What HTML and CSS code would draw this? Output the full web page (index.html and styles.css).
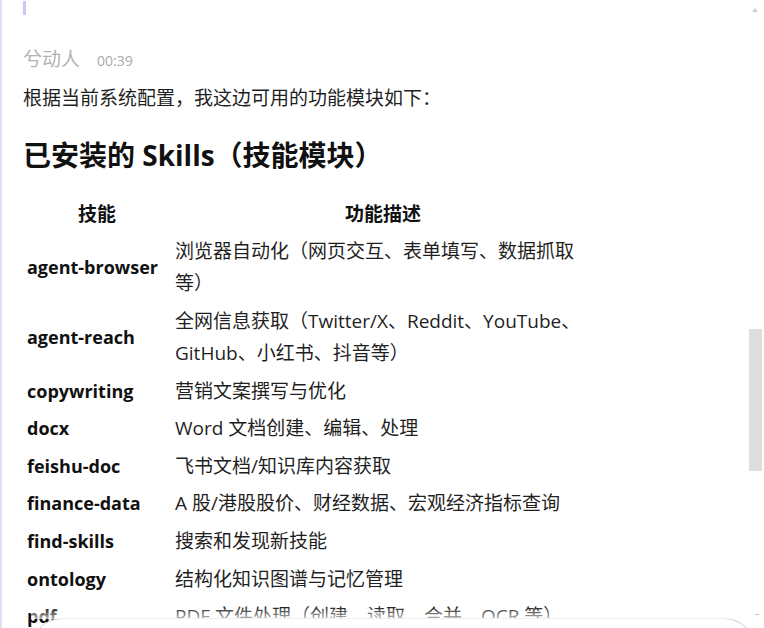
FILE: index.html
```html
<!DOCTYPE html>
<html lang="zh-CN">
<head>
<meta charset="utf-8">
<title>Skills</title>
<link rel="stylesheet" href="styles.css">
</head>
<body>
<div class="edge"></div>
<main class="chat">
  <div class="marker"></div>
  <div class="meta"><span class="name">兮动人</span><span class="time">00:39</span></div>
  <p class="intro">根据当前系统配置，我这边可用的功能模块如下：</p>
  <h2 class="title">已安装的 Skills（技能模块）</h2>
  <table class="skills">
    <colgroup><col class="c1"><col class="c2"></colgroup>
    <thead>
      <tr><th>技能</th><th>功能描述</th></tr>
    </thead>
    <tbody>
      <tr><td class="k">agent-browser</td><td>浏览器自动化（网页交互、表单填写、数据抓取等）</td></tr>
      <tr><td class="k">agent-reach</td><td>全网信息获取（Twitter/X、Reddit、YouTube、GitHub、小红书、抖音等）</td></tr>
      <tr><td class="k">copywriting</td><td>营销文案撰写与优化</td></tr>
      <tr><td class="k">docx</td><td>Word 文档创建、编辑、处理</td></tr>
      <tr><td class="k">feishu-doc</td><td>飞书文档/知识库内容获取</td></tr>
      <tr><td class="k">finance-data</td><td>A 股/港股股价、财经数据、宏观经济指标查询</td></tr>
      <tr><td class="k">find-skills</td><td>搜索和发现新技能</td></tr>
      <tr><td class="k">ontology</td><td>结构化知识图谱与记忆管理</td></tr>
      <tr><td class="k">pdf</td><td>PDF 文件处理（创建、读取、合并、OCR 等）</td></tr>
    </tbody>
  </table>
</main>
<div class="scroll-up"></div>
<div class="scroll-thumb"></div>
<div class="scroll-down"></div>
<div class="composer"></div>
</body>
</html>
```
FILE: styles.css
```css
html, body {
  margin: 0;
  padding: 0;
  height: 628px;
  overflow: hidden;
  background: #ffffff;
}
body {
  position: relative;
  font-family: "Open Sans", "Noto Sans CJK SC", sans-serif;
  color: #1f1f1f;
  font-size: 19px;
}
.edge {
  position: absolute;
  left: 0;
  top: 0;
  width: 2px;
  height: 100%;
  background: #dfe2f6;
}
.chat {
  padding-left: 23px;
}
.marker {
  width: 3px;
  height: 14px;
  margin-top: 1px;
  background: #c5c9f7;
}
.meta {
  margin-top: 32px;
  display: flex;
  align-items: baseline;
  gap: 17px;
  height: 24px;
  line-height: 24px;
}
.name {
  font-size: 19px;
  color: #b3b3b3;
}
.time {
  font-size: 14px;
  color: #aaaaaa;
}
.intro {
  margin: 11px 0 0;
  line-height: 32px;
}
.title {
  margin: 21px 0 0;
  font-size: 28px;
  line-height: 40px;
  font-weight: 700;
  color: #111111;
}
.skills {
  margin-top: 20px;
  border-collapse: collapse;
  table-layout: fixed;
  width: 572px;
}
.c1 { width: 148px; }
.c2 { width: 424px; }
.skills th,
.skills td {
  padding: 2.8px 4px;
  line-height: 32px;
  vertical-align: middle;
}
.skills th {
  text-align: center;
  font-weight: 700;
  color: #111111;
}
.skills td {
  text-align: left;
}
.skills td.k {
  font-size: 18px;
  font-weight: 700;
  color: #111111;
}
.scroll-up {
  position: absolute;
  top: 8px;
  left: 752px;
  width: 0;
  height: 0;
  border-left: 3.5px solid transparent;
  border-right: 3.5px solid transparent;
  border-bottom: 4px solid #cccccc;
}
.scroll-thumb {
  position: absolute;
  top: 329px;
  left: 749px;
  width: 13px;
  height: 142px;
  background: #dedede;
}
.scroll-down {
  position: absolute;
  top: 614px;
  left: 755px;
  width: 4px;
  height: 1px;
  background: #cccccc;
}
.composer {
  position: absolute;
  left: 30px;
  right: 8px;
  top: 618px;
  height: 70px;
  background: #ffffff;
  border: 1px solid #cfcfcf;
  border-radius: 32px;
}
.composer::before {
  content: "";
  position: absolute;
  left: 0;
  right: 0;
  top: -12px;
  height: 12px;
  background: linear-gradient(rgba(255,255,255,0), rgba(255,255,255,0.7));
}
```
